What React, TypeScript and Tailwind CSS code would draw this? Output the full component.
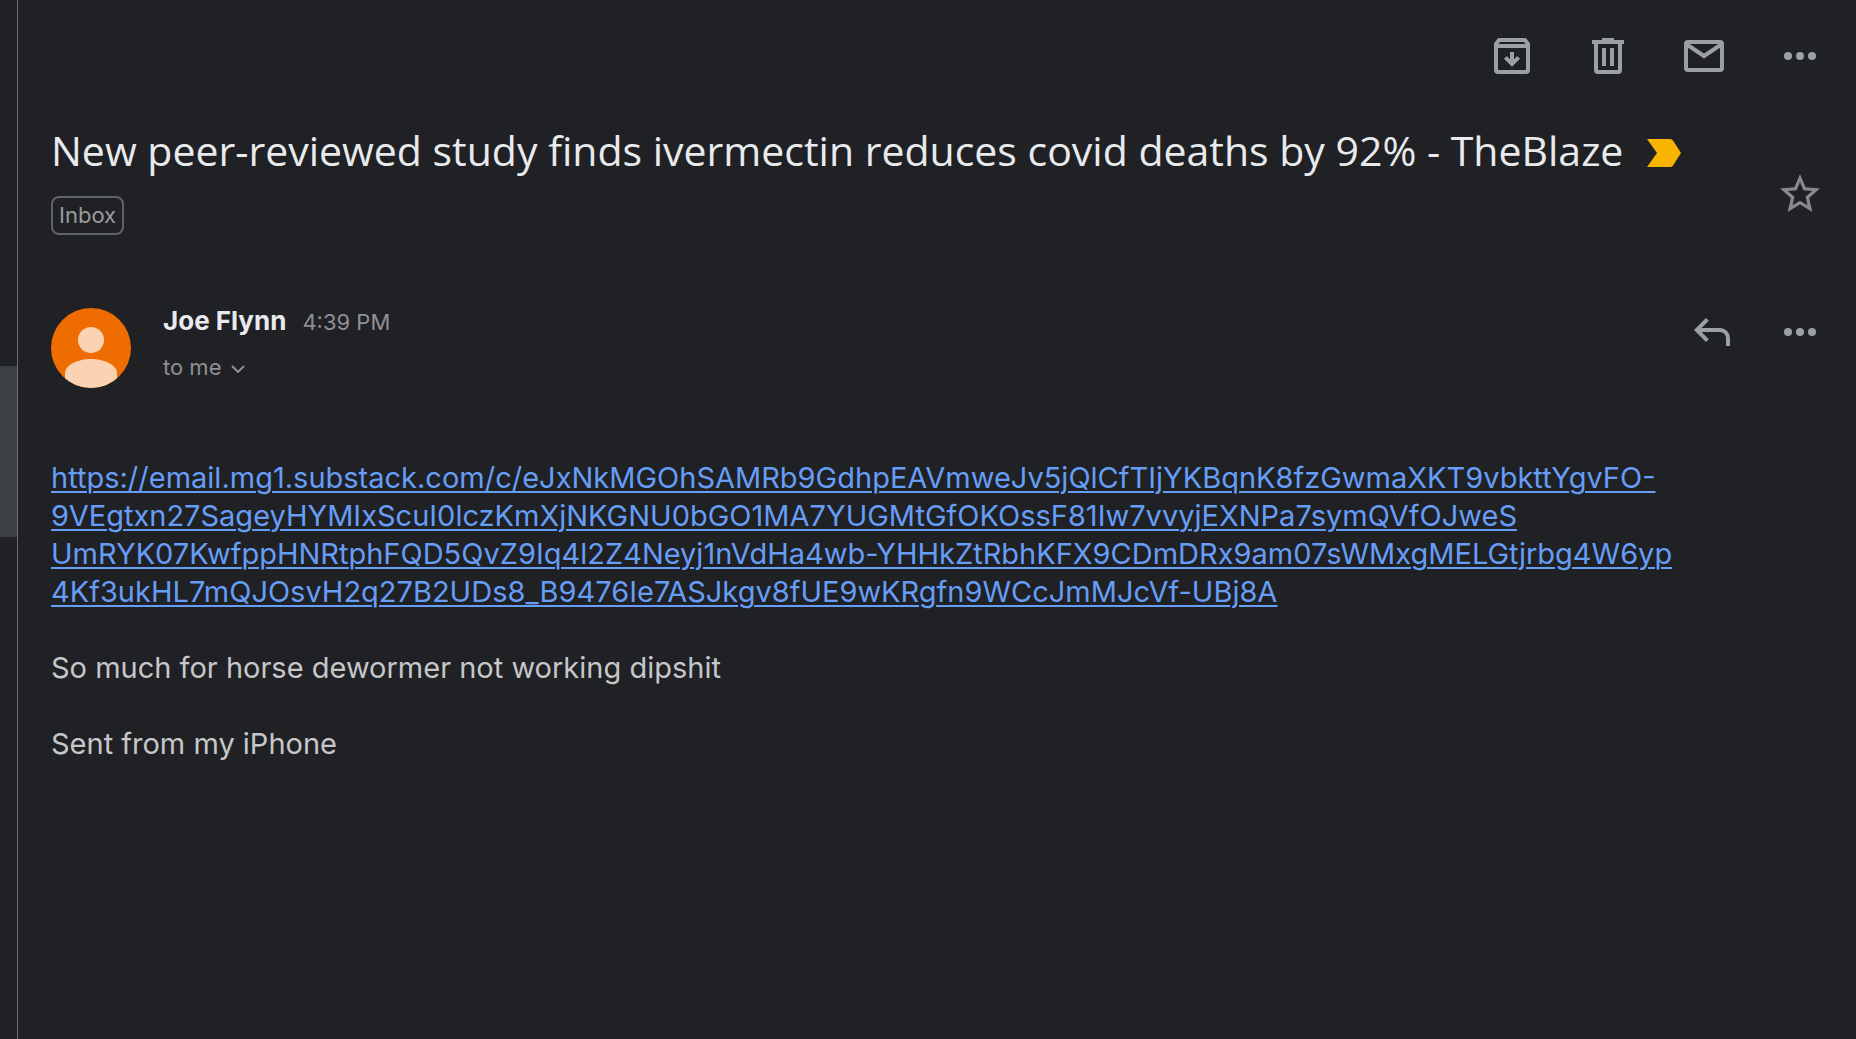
import type { ReactNode } from "react";

const SANS = "font-['Inter','Liberation_Sans',sans-serif]";

const LINK_LINES = [
  "https://email.mg1.substack.com/c/eJxNkMGOhSAMRb9GdhpEAVmweJv5jQlCfTIjYKBqnK8fzGwmaXKT9vbkttYgvFO-",
  "9VEgtxn27SageyHYMIxScuI0lczKmXjNKGNU0bGO1MA7YUGMtGfOKOssF81Iw7vvyjEXNPa7symQVfOJweS",
  "UmRYK07KwfppHNRtphFQD5QvZ9Iq4l2Z4Neyj1nVdHa4wb-YHHkZtRbhKFX9CDmDRx9am07sWMxgMELGtjrbg4W6yp",
  "4Kf3ukHL7mQJOsvH2q27B2UDs8_B9476Ie7ASJkgv8fUE9wKRgfn9WCcJmMJcVf-UBj8A",
];

function IconButton({ label, children }: { label: string; children: ReactNode }) {
  return (
    <button type="button" aria-label={label} className="size-12 shrink-0 text-[#9aa0a6]">
      <svg viewBox="0 0 24 24" fill="none" stroke="currentColor" strokeWidth="2" className="size-12">
        {children}
      </svg>
    </button>
  );
}

function Dots() {
  return (
    <g fill="currentColor" stroke="none">
      <circle cx="6" cy="12" r="2" />
      <circle cx="12" cy="12" r="2" />
      <circle cx="18" cy="12" r="2" />
    </g>
  );
}

function Toolbar() {
  return (
    <div className="flex justify-end gap-12">
      <IconButton label="Archive">
        <path
          fill="currentColor"
          stroke="none"
          fillRule="evenodd"
          d="M5.6 3h12.8c.4 0 .8.2 1 .5l1.3 1.7c.2.3.3.6.3 1V19a2 2 0 0 1-2 2H5a2 2 0 0 1-2-2V6.200c0-.4.1-.7.3-1l1.300-1.700c.2-.3.6-.5 1-.5zM6 5l-.7 1h13.400L18 5zM5 8v11h14V8z"
        />
        <path fill="currentColor" stroke="none" d="M11 10h2v3.600l1.600-1.600 1.400 1.400-4 4-4-4L9.400 12l1.600 1.600z" />
      </IconButton>
      <IconButton label="Delete">
        <path
          fill="currentColor"
          stroke="none"
          fillRule="evenodd"
          d="M9 3h6v1h5v2h-1v13a2 2 0 0 1-2 2H7a2 2 0 0 1-2-2V6H4V4h5zM7 6v13h10V6zM9 8h2v9H9zM13 8h2v9h-2z"
        />
      </IconButton>
      <IconButton label="Mark as unread">
        <rect x="3" y="5" width="18" height="14" rx="1" />
        <path d="M3 6l9 6 9-6" />
      </IconButton>
      <IconButton label="More options">
        <Dots />
      </IconButton>
    </div>
  );
}

function Subject() {
  return (
    <div className="mt-[42px] flex items-start justify-between">
      <div>
        <h1 className="flex items-center gap-6 font-['Open_Sans',sans-serif] text-[41px] leading-[56px] text-[#e8eaed]">
          New peer-reviewed study finds ivermectin reduces covid deaths by 92% - TheBlaze
          <svg viewBox="0 0 34 28" className="mt-1.5 h-7 w-[34px] shrink-0" aria-label="Important">
            <path fill="#f9b402" d="M0 0h23q2 0 3 1.500L34 14l-8 12.500q-1 1.500-3 1.500H0l10-14z" />
          </svg>
        </h1>
        <button
          type="button"
          className="mt-[18px] block rounded-lg border-2 border-[#5f6368] px-1.5 text-[22px] leading-[35px] text-[#9a9b9e]"
        >
          Inbox
        </button>
      </div>
      <button type="button" aria-label="Star" className="mt-12 size-12 shrink-0 text-[#88898c]">
        <svg viewBox="0 0 24 24" fill="currentColor" className="size-12">
          <path d="M22 9.240l-7.190-.62L12 2 9.190 8.630 2 9.240l5.460 4.730L5.820 21 12 17.270 18.180 21l-1.630-7.030L22 9.240zM12 15.400l-3.760 2.270 1-4.280-3.320-2.880 4.380-.38L12 6.100l1.710 4.040 4.380.38-3.320 2.880 1 4.280L12 15.400z" />
        </svg>
      </button>
    </div>
  );
}

function Sender() {
  return (
    <div className="mt-[73px] flex items-start">
      <svg viewBox="0 0 80 80" className="size-20 shrink-0" aria-hidden="true">
        <clipPath id="avatar">
          <circle cx="40" cy="40" r="40" />
        </clipPath>
        <g clipPath="url(#avatar)">
          <rect width="80" height="80" fill="#ef6c00" />
          <circle cx="40" cy="32" r="13" fill="#f9d3b4" />
          <path fill="#f9d3b4" d="M14 80V65c0-8 13-14 26-14s26 6 26 14v15z" />
        </g>
      </svg>
      <div className="ml-8 flex-1">
        <div className="flex items-baseline gap-4 leading-[26px]">
          <span className="text-[26px] font-bold text-[#e8eaed]">Joe Flynn</span>
          <span className="text-[22px] text-[#8f9093]">4:39 PM</span>
        </div>
        <button type="button" className="mt-[18px] flex items-center gap-2.5 text-[22px] leading-7 text-[#8f9093]">
          to me
          <svg viewBox="0 0 14 8" fill="none" stroke="currentColor" strokeWidth="2" className="mt-1 h-2 w-3.5">
            <path d="M1 1l6 6 6-6" />
          </svg>
        </button>
      </div>
      <div className="flex gap-10">
        <IconButton label="Reply">
          <path d="M9.700 5.700L4.400 11l5.300 5.300M4.400 11H16a4 4 0 0 1 4 4v4" />
        </IconButton>
        <IconButton label="More message options">
          <Dots />
        </IconButton>
      </div>
    </div>
  );
}

export default function App() {
  return (
    <div className={`flex min-h-screen bg-[#202124] ${SANS}`}>
      <aside className="w-[18px] shrink-0 border-r border-[#6b6d70] pt-[366px]">
        <div className="h-[171px] bg-[#3c4043]" />
      </aside>
      <main className="min-w-0 flex-1 pt-8 pr-8 pb-16 pl-[33px]">
        <Toolbar />
        <Subject />
        <Sender />
        <article className="mt-[71px] text-[29px] leading-[38px] text-[#c6c7c9]">
          <a href="#message-link" className="text-[#669df6] underline decoration-2 underline-offset-3">
            {LINK_LINES.map((line) => (
              <span key={line} className="block whitespace-nowrap">
                {line}
              </span>
            ))}
          </a>
          <p className="mt-[38px]">So much for horse dewormer not working dipshit</p>
          <p className="mt-[38px]">Sent from my iPhone</p>
        </article>
      </main>
    </div>
  );
}
